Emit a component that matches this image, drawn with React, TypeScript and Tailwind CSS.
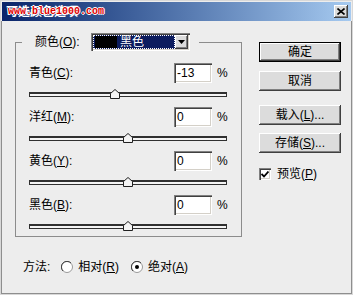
import React from "react";

const rows = [
  { name: "青色", key: "C", value: -13 },
  { name: "洋红", key: "M", value: 0 },
  { name: "黄色", key: "Y", value: 0 },
  { name: "黑色", key: "B", value: 0 },
];

const raised =
  "shadow-[inset_-1px_-1px_0_#404040,inset_1px_1px_0_#ffffff,inset_-2px_-2px_0_#808080]";
const sunken =
  "shadow-[inset_1px_1px_0_#808080,inset_2px_2px_0_#404040,inset_-1px_-1px_0_#ffffff,inset_-2px_-2px_0_#d4d0c8]";

function Btn({ children, primary }: { children: React.ReactNode; primary?: boolean }) {
  return (
    <button
      className={`flex items-center justify-center w-[82px] h-[20px] bg-[#dcdcdc] text-[12px] leading-none text-black ${
        primary ? "border border-black" : ""
      } ${raised}`}
    >
      {children}
    </button>
  );
}

function Slider({ value }: { value: number }) {
  // thumb centre: 99px from track start at 0%, 0.99px per percent
  const left = 99 + value * 0.99 - 5;
  return (
    <div className="relative mt-[6px] h-[10px]">
      <div className="mt-[3px] h-[5px] w-[198px] border border-t-2 border-[#303030] bg-[#f4f4f4]" />
      <svg className="absolute top-0" style={{ left }} width="10" height="10" viewBox="0 0 10 10">
        <polygon points="0.5,9.5 0.5,4.5 5,0.5 9.5,4.5 9.5,9.5" fill="#f4f4f4" stroke="#202020" />
      </svg>
    </div>
  );
}

function Radio({ checked }: { checked?: boolean }) {
  return (
    <svg width="12" height="12" viewBox="0 0 12 12">
      <circle cx="6" cy="6" r="5.5" fill="#fff" stroke="#9a9a9a" />
      <path d="M2 10 A5.5 5.5 0 0 1 10 2" fill="none" stroke="#404040" strokeWidth="1" />
      {checked && <circle cx="6" cy="6" r="2" fill="#000" />}
    </svg>
  );
}

export default function App() {
  return (
    <div className="w-[353px] h-[295px] flex flex-col bg-[#ededed] border border-[#d8d8d8] font-['Liberation_Sans','Noto_Sans_CJK_SC',sans-serif] text-[12px] text-black select-none">
      {/* Title bar */}
      <div className="relative mx-[1px] mt-[1px] h-[19px] flex items-center bg-gradient-to-r from-[#0a246a] to-[#a6caf0]">
        <span className="ml-[4px] text-white font-bold text-[12px] leading-none">可选颜色选项</span>
        <span className="absolute left-[6px] top-[2px] font-['Liberation_Mono',monospace] font-bold text-[10px] text-[#e00000] [text-shadow:1px_0_#fff,-1px_0_#fff,0_1px_#fff,0_-1px_#fff]">
          www.blue1000.com
        </span>
        <div
          className={`ml-auto mr-[3px] w-[14px] h-[13px] flex items-center justify-center bg-[#dcdcdc] ${raised}`}
        >
          <svg width="8" height="7" viewBox="0 0 8 7">
            <path d="M0.5 0.5 L7.5 6.5 M7.5 0.5 L0.5 6.5" stroke="#000" strokeWidth="1.6" />
          </svg>
        </div>
      </div>

      {/* Body */}
      <div className="flex-1 flex flex-col border-x border-b border-[#8e8e8e]">
        <div className="flex pt-[12px] pl-[13px]">
          <fieldset className="w-[227px] border border-[#8c8c8c] pl-[13px] pr-[13px] pt-[12px] pb-[5px]">
            <legend className="-ml-[7px] pl-[13px] pr-[9px] flex items-center">
              <span className="w-[56px] leading-none">
                颜色(<u>O</u>):
              </span>
              <div className={`flex w-[99px] h-[18px] p-[2px] bg-white ${sunken}`}>
                <div className="flex-1 flex items-center bg-[#0c1c5e] border border-dotted border-white">
                  <div className="ml-[1px] w-[22px] h-full bg-black" />
                  <span className="ml-[3px] text-white leading-none">黑色</span>
                </div>
                <div className={`w-[13px] h-full flex items-center justify-center bg-[#dcdcdc] ${raised}`}>
                  <svg width="7" height="4" viewBox="0 0 7 4">
                    <polygon points="0,0 7,0 3.5,4" fill="#000" />
                  </svg>
                </div>
              </div>
            </legend>

            <div className="flex flex-col gap-[8px]">
              {rows.map((r) => (
                <div key={r.key} className="flex flex-col">
                  <div className="flex items-center h-[20px]">
                    <span className="flex-1 leading-none">
                      {r.name}(<u>{r.key}</u>):
                    </span>
                    <div className={`w-[38px] h-[20px] flex items-center pl-[3px] bg-white leading-none ${sunken}`}>
                      {r.value}
                    </div>
                    <span className="ml-[5px] w-[11px] leading-none">%</span>
                  </div>
                  <Slider value={r.value} />
                </div>
              ))}
            </div>
          </fieldset>

          <div className="ml-[17px] mt-[9px] flex flex-col">
            <Btn primary>确定</Btn>
            <div className="mt-[9px]">
              <Btn>取消</Btn>
            </div>
            <div className="mt-[14px]">
              <Btn>
                载入(<u>L</u>)...
              </Btn>
            </div>
            <div className="mt-[8px]">
              <Btn>
                存储(<u>S</u>)...
              </Btn>
            </div>
            <div className="mt-[15px] flex items-center">
              <div className={`w-[12px] h-[12px] flex items-center justify-center bg-white ${sunken}`}>
                <svg width="8" height="7" viewBox="0 0 8 7">
                  <path d="M0.5 3 L3 5.5 L7.5 0.5" fill="none" stroke="#000" strokeWidth="1.8" />
                </svg>
              </div>
              <span className="ml-[6px] leading-none">
                预览(<u>P</u>)
              </span>
            </div>
          </div>
        </div>

        <div className="mt-[22px] pl-[21px] flex items-center h-[16px]">
          <span className="leading-none">方法:</span>
          <div className="ml-[11px]">
            <Radio />
          </div>
          <span className="ml-[5px] leading-none">
            相对(<u>R</u>)
          </span>
          <div className="ml-[12px]">
            <Radio checked />
          </div>
          <span className="ml-[5px] leading-none">
            绝对(<u>A</u>)
          </span>
        </div>
      </div>
    </div>
  );
}
